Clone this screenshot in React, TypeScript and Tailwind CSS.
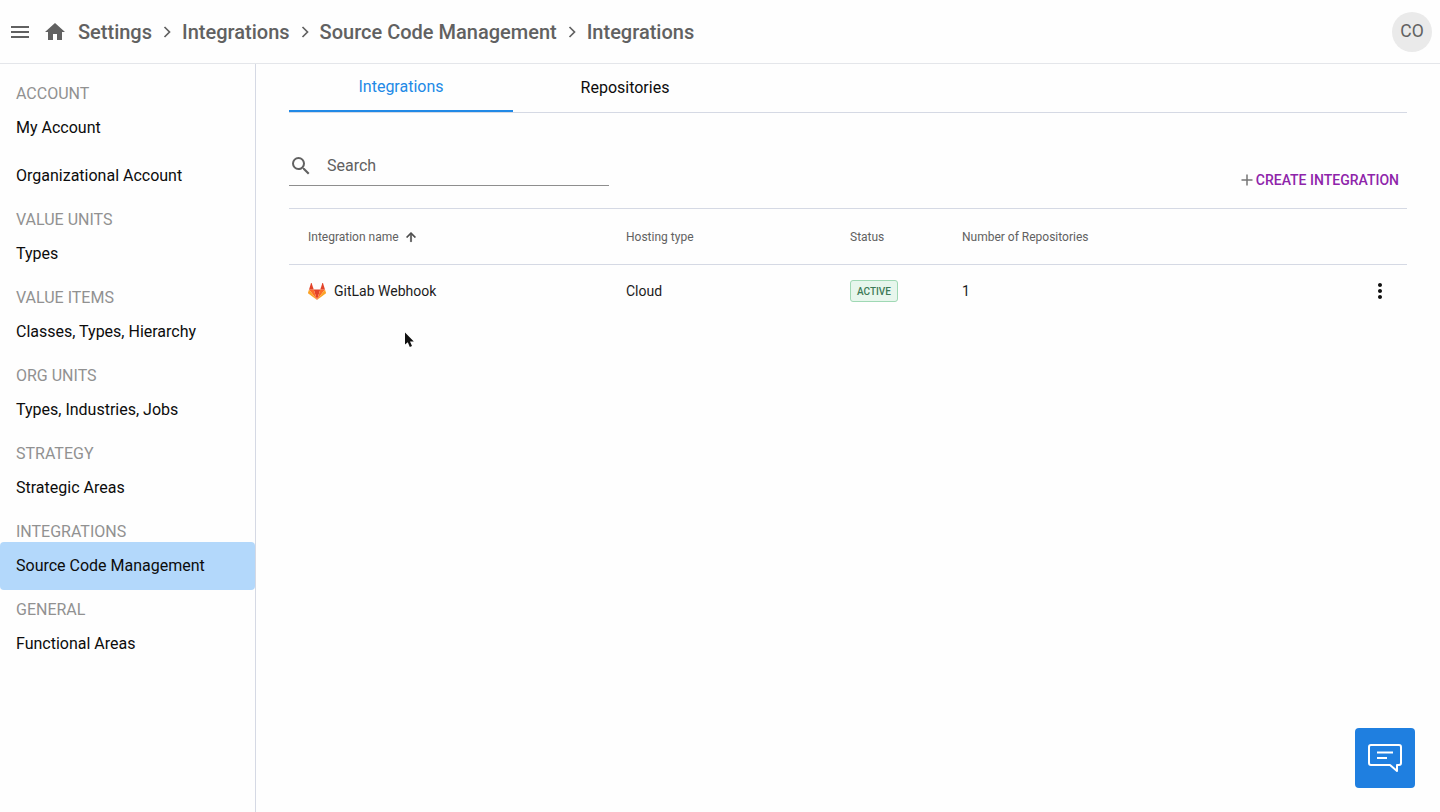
import React from "react";

const nav: [string, string[]][] = [
  ["ACCOUNT", ["My Account", "Organizational Account"]],
  ["VALUE UNITS", ["Types"]],
  ["VALUE ITEMS", ["Classes, Types, Hierarchy"]],
  ["ORG UNITS", ["Types, Industries, Jobs"]],
  ["STRATEGY", ["Strategic Areas"]],
  ["INTEGRATIONS", ["Source Code Management"]],
  ["GENERAL", ["Functional Areas"]],
];

function Chevron() {
  return (
    <svg width="24" height="24" viewBox="0 0 24 24" fill="none" stroke="#616161" strokeWidth="1.7" className="mx-[3px] shrink-0">
      <path d="M9.5 7 L14.5 12 L9.5 17" />
    </svg>
  );
}

function GitLab() {
  return (
    <svg width="18" height="17" viewBox="0 0 18 17" className="shrink-0">
      <path d="M9 17 L12.3 6.6 H5.7 Z" fill="#e24329" />
      <path d="M9 17 L5.7 6.6 H1 Z" fill="#fc6d26" />
      <path d="M1 6.6 L0 9.8 C-0.1 10.1 0 10.4 0.3 10.6 L9 17 Z" fill="#fca326" />
      <path d="M1 6.6 H5.7 L3.7 0.3 C3.6 0 3.1 0 3 0.3 Z" fill="#e24329" />
      <path d="M9 17 L12.3 6.6 H17 Z" fill="#fc6d26" />
      <path d="M17 6.6 L18 9.8 C18.1 10.1 18 10.4 17.7 10.6 L9 17 Z" fill="#fca326" />
      <path d="M17 6.6 H12.3 L14.3 0.3 C14.4 0 14.9 0 15 0.3 Z" fill="#e24329" />
    </svg>
  );
}

export default function App() {
  return (
    <div className="relative flex h-[812px] w-[1440px] flex-col overflow-hidden bg-[#fefefe] font-['Roboto',sans-serif]">
      <header className="flex h-[64px] shrink-0 items-center border-b border-[#e4e6ea] pl-[8px] pr-[8px]">
        <svg width="24" height="24" viewBox="0 0 24 24" fill="#616161" className="shrink-0">
          <path d="M3 18h18v-2H3v2zm0-5h18v-2H3v2zm0-7v2h18V6H3z" />
        </svg>
        <svg width="24" height="24" viewBox="0 0 24 24" fill="#616161" className="ml-[11px] shrink-0">
          <path d="M10 20v-6h4v6h5v-8h3L12 3 2 12h3v8z" />
        </svg>
        <nav className="ml-[games] flex items-center text-[20px] font-medium leading-[24px] text-[#616161]" style={{ marginLeft: 11 }}>
          <span>Settings</span>
          <Chevron />
          <span>Integrations</span>
          <Chevron />
          <span>Source Code Management</span>
          <Chevron />
          <span>Integrations</span>
        </nav>
        <div className="ml-auto flex h-[40px] w-[40px] items-center justify-center rounded-full bg-[#eaeaea] text-[17.5px] text-[#616161]">CO</div>
      </header>
      <div className="flex min-h-0 flex-1">
        <aside className="w-[256px] shrink-0 border-r border-[#d5d9e4] pt-[10px]">
          {nav.map(([label, items]) => (
            <div key={label}>
              <div className="h-[30px] pt-[10px] pl-[16px] text-[16px] leading-[20px] text-[#919191]">{label}</div>
              {items.map((item) => (
                <div
                  key={item}
                  className={
                    "flex h-[48px] items-center pl-[16px] text-[16px] text-[#0c0c0c] " +
                    (item === "Source Code Management" ? "rounded-[4px] bg-[#b3d8fb]" : "")
                  }
                >
                  {item}
                </div>
              ))}
            </div>
          ))}
        </aside>
        <main className="min-w-0 flex-1 pl-[33px] pr-[33px]">
          <div className="flex h-[49px] border-b border-[#d5d9e4]">
            <div className="flex h-[48px] w-[224px] items-center justify-center border-b-2 border-[#2189e6] text-[16px] text-[#2189e6]">Integrations</div>
            <div className="flex h-[48px] w-[224px] items-center justify-center text-[16px] text-[#0c0c0c]">Repositories</div>
          </div>
          <div className="flex h-[95px] items-start justify-between">
            <div className="mt-[33px] flex h-[40px] w-[320px] items-center border-b border-[#8e8e8e]">
              <svg width="24" height="24" viewBox="0 0 24 24" fill="#616161" className="shrink-0">
                <path d="M15.5 14h-.79l-.28-.27A6.47 6.47 0 0 0 16 9.5 6.5 6.5 0 1 0 9.5 16c1.61 0 3.09-.59 4.23-1.57l.27.28v.79l5 4.99L20.49 19l-4.99-5zm-6 0C7.01 14 5 11.99 5 9.5S7.01 5 9.5 5 14 7.01 14 9.5 11.99 14 9.5 14z" />
              </svg>
              <span className="ml-[14px] text-[16px] text-[#616161]">Search</span>
            </div>
            <div className="mr-[8px] mt-[57px] flex items-center">
              <svg width="14" height="14" viewBox="0 0 14 14" stroke="#757575" strokeWidth="1.5" className="mr-[2px]">
                <path d="M7 1.5v11M1.5 7h11" />
              </svg>
              <span className="text-[14px] font-medium leading-[20px] text-[#8e24aa]">CREATE INTEGRATION</span>
            </div>
          </div>
          <div className="flex h-[57px] items-center border-y border-[#d5d9e4] pl-[19px] text-[12px] text-[#616161]">
            <div className="flex w-[318px] items-center">
              Integration name
              <svg width="14" height="14" viewBox="0 0 24 24" fill="#4a4a4a" className="ml-[5px]">
                <path d="M4 12l1.41 1.41L11 7.83V20h2V7.83l5.58 5.59L20 12l-8-8-8 8z" stroke="#4a4a4a" strokeWidth="1" />
              </svg>
            </div>
            <div className="w-[224px]">Hosting type</div>
            <div className="w-[112px]">Status</div>
            <div>Number of Repositories</div>
          </div>
          <div className="flex h-[52px] items-center pl-[19px] text-[14px] text-[#1c1c1c]">
            <div className="flex w-[318px] items-center gap-[8px]">
              <GitLab />
              <span>GitLab Webhook</span>
            </div>
            <div className="w-[224px]">Cloud</div>
            <div className="w-[112px]">
              <span className="inline-flex h-[22px] w-[48px] items-center justify-center rounded-[3px] border border-[#9fd8b4] bg-[#e7f6ec] text-[10px] font-medium text-[#3d7a57]">ACTIVE</span>
            </div>
            <div>1</div>
            <svg width="24" height="24" viewBox="0 0 24 24" fill="#111111" className="ml-auto mr-[15px]">
              <path d="M12 8c1.1 0 2-.9 2-2s-.9-2-2-2-2 .9-2 2 .9 2 2 2zm0 2c-1.1 0-2 .9-2 2s.9 2 2 2 2-.9 2-2-.9-2-2-2zm0 6c-1.1 0-2 .9-2 2s.9 2 2 2 2-.9 2-2-.9-2-2-2z" />
            </svg>
          </div>
        </main>
      </div>
      <svg width="12" height="18" viewBox="0 0 12 18" className="absolute left-[404px] top-[332px]">
        <path d="M1 0.5 V12.5 L3.8 10.2 L5.8 15 L8 14 L6 9.5 H9.8 Z" fill="#111111" />
      </svg>
      <div className="absolute left-[1355px] top-[728px] flex h-[60px] w-[60px] items-center justify-center rounded-[4px] bg-[#1f7fe0]">
        <svg width="36" height="30" viewBox="0 0 36 30" fill="none" stroke="#ffffff" strokeWidth="2">
          <path d="M4 2 H32 A2 2 0 0 1 34 4 V20 A2 2 0 0 1 32 22 H30 V28 L23 22 H4 A2 2 0 0 1 2 20 V4 A2 2 0 0 1 4 2 Z" strokeLinejoin="round" />
          <path d="M10 9.5 H26 M10 15 H20" />
        </svg>
      </div>
    </div>
  );
}
